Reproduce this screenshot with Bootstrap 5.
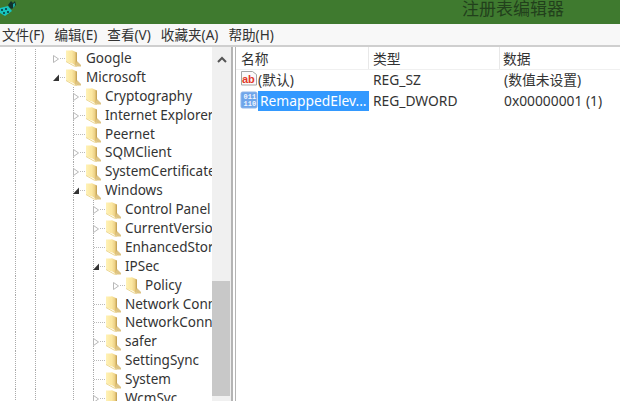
<!DOCTYPE html>
<html lang="zh-CN"><head><meta charset="utf-8"><title>注册表编辑器</title>
<link href="https://cdn.jsdelivr.net/npm/bootstrap@5.3.0/dist/css/bootstrap.min.css" rel="stylesheet">
<style>
html,body{width:620px;height:401px;overflow:hidden;margin:0;background:#fff}
body{font-family:"Noto Sans","Noto Sans CJK SC",sans-serif;font-size:13.5px;color:#333;line-height:19px}
.shell{width:620px;height:401px}
.titlebar{height:24px;background:#3f7a2f;color:#22401c;font-size:17px;position:relative}
.titlebar .ttl{margin-left:462px;line-height:18px}
.appicon{position:absolute;left:0;top:0}
.menubar{height:23px;background:#f8f8f8;border-bottom:2px solid #cfcfcf;padding-left:2px;gap:10px;line-height:21px;white-space:nowrap;font-size:13.6px}
.panes{height:354px}
.treepane{width:233px;flex:none;border-right:2px solid #b4b4b4}
.treelist{width:212px;flex:none;padding-top:2px;overflow:hidden}
.trow{height:18.9px;white-space:nowrap;align-items:center}
.gd{width:20px;height:19px;flex:none}
.gd0{width:16px;border-right:1px dotted #aaa}
.gd1{width:20px;border-right:1px dotted #aaa}
.gd2{width:38px;border-right:1px dotted #aaa}
.gd3{width:20px;border-right:1px dotted #aaa}
.tog{width:11px;height:19px;flex:none;overflow:visible}
.fld{width:17px;height:18px;flex:none;margin-right:3px}
.pad2{width:18px;flex:none}
.lvl2{margin-left:1px}
.sb{width:19px;background:#f0f0f0;flex:none}
.sbup{height:25px}
.sbtrack{flex:1 1 auto}
.sbthumb{height:115px;margin-top:209px;margin-right:1px;background:#c8c8c8}
.gap{width:3px;background:#fff;border-right:1px solid #b4b4b4;flex:none}
.listpane{flex:1 1 auto;min-width:0;font-size:13.8px}
.cols{height:23px;line-height:24px;border-bottom:1px solid #f0f0f0}
.c1{width:132px;flex:none;padding-left:5px}
.c2{width:131px;flex:none;padding-left:4px;border-left:1px solid #e8e8e8}
.c3{flex:1 1 auto;padding-left:3px;border-left:1px solid #e8e8e8}
.lrow{height:21px;line-height:20px;white-space:nowrap}
.lrow .c2,.lrow .c3{border-left:0}
.lrow .c2{padding-left:5px}
.lrow .c3{padding-left:5px}
.lrow .c1{padding-left:4px;align-items:flex-start;gap:0}
.sel{background:#3399ff;color:#fff;width:111px;height:20px;padding-left:2px;line-height:20px;flex:none}
.ico{width:18px;height:18px;flex:none}
.abt{font:700 11px "Liberation Sans",sans-serif;fill:#e2392b}
.bint{font:700 7px "Liberation Mono",monospace;fill:#f2f7ff}
</style></head><body>
<svg width="0" height="0" class="d-block position-absolute"><defs>
<linearGradient id="fg" x1="0" x2="1" y1="0" y2="0"><stop offset="0" stop-color="#fbe9a6"/><stop offset=".6" stop-color="#eed184"/><stop offset="1" stop-color="#bd9a4c"/></linearGradient>
<linearGradient id="fl" x1="0" x2="1" y1="0" y2="0"><stop offset="0" stop-color="#fff2b8"/><stop offset="1" stop-color="#fbe59a"/></linearGradient>
<symbol id="folder" viewBox="0 0 17 18" overflow="visible"><path d="M1 1.500h6v13L1 12.500Z" fill="url(#fl)"/><path d="M6.500 1l5.500 2.500V17.500L6.500 14Z" fill="url(#fg)"/><path d="M12 12l4 4v1.500H9.500Z" fill="#ddc383"/><path d="M1 12.500l8 4.500h3" stroke="#ecd690" fill="none"/></symbol>
<symbol id="open" viewBox="0 0 11 19" overflow="visible"><path d="M-.5 6.500l5 3.500-5 3.500Z" fill="#fff" stroke="#b8b8b8"/><path d="M6 9.500h5" stroke="#bbb" stroke-dasharray="1 1"/></symbol>
<symbol id="shut" viewBox="0 0 11 19" overflow="visible"><path d="M5 6.500v6.500H-1Z" fill="#333"/><path d="M6 9.500h5" stroke="#bbb" stroke-dasharray="1 1"/></symbol>
<symbol id="leaf" viewBox="0 0 11 19"><path d="M0 9.500h11" stroke="#bbb" stroke-dasharray="1 1"/></symbol>
</defs></svg>
<div class="shell d-flex flex-column">
<div class="titlebar flex-shrink-0">
<svg class="appicon" width="18" height="18" viewBox="0 0 18 18"><path d="M0 8l8-2 4 5-7 5-5-3Z" fill="#17c4bd"/><path d="M1 9h2v2H1ZM5 8h2v2H5ZM3 12h2v2H3ZM7 11h2v2H7Z" fill="#0a5a58"/><path d="M8 5l3-4 2 2 2-2 1 4-4 4-2-1Z" fill="#12332d"/><path d="M13 4l2-1v3l-2 2Z" fill="#1ea79f"/></svg>
<div class="ttl">注册表编辑器</div>
</div>
<div class="menubar d-flex flex-shrink-0"><span>文件(F)</span><span>编辑(E)</span><span>查看(V)</span><span>收藏夹(A)</span><span>帮助(H)</span></div>
<div class="panes d-flex">
<div class="treepane d-flex flex-shrink-0">
<div class="treelist">
<div class="trow d-flex"><span class="gd gd0"></span><span class="gd gd1"></span><span class="pad2"></span><svg class="tog"><use href="#open"/></svg><svg class="fld"><use href="#folder"/></svg><span class="lvl2">Google</span></div>
<div class="trow d-flex"><span class="gd gd0"></span><span class="gd gd1"></span><span class="pad2"></span><svg class="tog"><use href="#shut"/></svg><svg class="fld"><use href="#folder"/></svg><span class="lvl2">Microsoft</span></div>
<div class="trow d-flex"><span class="gd gd0"></span><span class="gd gd1"></span><span class="gd gd2"></span><svg class="tog"><use href="#open"/></svg><svg class="fld"><use href="#folder"/></svg><span>Cryptography</span></div>
<div class="trow d-flex"><span class="gd gd0"></span><span class="gd gd1"></span><span class="gd gd2"></span><svg class="tog"><use href="#open"/></svg><svg class="fld"><use href="#folder"/></svg><span>Internet Explorer</span></div>
<div class="trow d-flex"><span class="gd gd0"></span><span class="gd gd1"></span><span class="gd gd2"></span><svg class="tog"><use href="#leaf"/></svg><svg class="fld"><use href="#folder"/></svg><span>Peernet</span></div>
<div class="trow d-flex"><span class="gd gd0"></span><span class="gd gd1"></span><span class="gd gd2"></span><svg class="tog"><use href="#open"/></svg><svg class="fld"><use href="#folder"/></svg><span>SQMClient</span></div>
<div class="trow d-flex"><span class="gd gd0"></span><span class="gd gd1"></span><span class="gd gd2"></span><svg class="tog"><use href="#open"/></svg><svg class="fld"><use href="#folder"/></svg><span>SystemCertificates</span></div>
<div class="trow d-flex"><span class="gd gd0"></span><span class="gd gd1"></span><span class="gd gd2"></span><svg class="tog"><use href="#shut"/></svg><svg class="fld"><use href="#folder"/></svg><span>Windows</span></div>
<div class="trow d-flex"><span class="gd gd0"></span><span class="gd gd1"></span><span class="gd gd2"></span><span class="gd gd3"></span><svg class="tog"><use href="#open"/></svg><svg class="fld"><use href="#folder"/></svg><span>Control Panel</span></div>
<div class="trow d-flex"><span class="gd gd0"></span><span class="gd gd1"></span><span class="gd gd2"></span><span class="gd gd3"></span><svg class="tog"><use href="#open"/></svg><svg class="fld"><use href="#folder"/></svg><span>CurrentVersion</span></div>
<div class="trow d-flex"><span class="gd gd0"></span><span class="gd gd1"></span><span class="gd gd2"></span><span class="gd gd3"></span><svg class="tog"><use href="#leaf"/></svg><svg class="fld"><use href="#folder"/></svg><span>EnhancedStorage</span></div>
<div class="trow d-flex"><span class="gd gd0"></span><span class="gd gd1"></span><span class="gd gd2"></span><span class="gd gd3"></span><svg class="tog"><use href="#shut"/></svg><svg class="fld"><use href="#folder"/></svg><span>IPSec</span></div>
<div class="trow d-flex"><span class="gd gd0"></span><span class="gd gd1"></span><span class="gd gd2"></span><span class="gd gd3"></span><span class="gd"></span><svg class="tog"><use href="#open"/></svg><svg class="fld"><use href="#folder"/></svg><span>Policy</span></div>
<div class="trow d-flex"><span class="gd gd0"></span><span class="gd gd1"></span><span class="gd gd2"></span><span class="gd gd3"></span><svg class="tog"><use href="#leaf"/></svg><svg class="fld"><use href="#folder"/></svg><span>Network Connections</span></div>
<div class="trow d-flex"><span class="gd gd0"></span><span class="gd gd1"></span><span class="gd gd2"></span><span class="gd gd3"></span><svg class="tog"><use href="#leaf"/></svg><svg class="fld"><use href="#folder"/></svg><span>NetworkConnectivity</span></div>
<div class="trow d-flex"><span class="gd gd0"></span><span class="gd gd1"></span><span class="gd gd2"></span><span class="gd gd3"></span><svg class="tog"><use href="#open"/></svg><svg class="fld"><use href="#folder"/></svg><span>safer</span></div>
<div class="trow d-flex"><span class="gd gd0"></span><span class="gd gd1"></span><span class="gd gd2"></span><span class="gd gd3"></span><svg class="tog"><use href="#leaf"/></svg><svg class="fld"><use href="#folder"/></svg><span>SettingSync</span></div>
<div class="trow d-flex"><span class="gd gd0"></span><span class="gd gd1"></span><span class="gd gd2"></span><span class="gd gd3"></span><svg class="tog"><use href="#leaf"/></svg><svg class="fld"><use href="#folder"/></svg><span>System</span></div>
<div class="trow d-flex"><span class="gd gd0"></span><span class="gd gd1"></span><span class="gd gd2"></span><span class="gd gd3"></span><svg class="tog"><use href="#open"/></svg><svg class="fld"><use href="#folder"/></svg><span>WcmSvc</span></div>
</div>
<div class="sb d-flex flex-column">
<div class="sbup d-flex align-items-center justify-content-center"><svg width="10" height="7" viewBox="0 0 10 7"><path d="M1 6l4-4 4 4" fill="none" stroke="#555" stroke-width="2"/></svg></div>
<div class="sbtrack"><div class="sbthumb"></div></div>
</div>
</div>
<div class="gap"></div>
<div class="listpane">
<div class="cols d-flex"><div class="c1">名称</div><div class="c2">类型</div><div class="c3">数据</div></div>
<div class="lrow d-flex"><div class="c1 d-flex"><svg class="ico" viewBox="0 0 18 18"><path d="M1.500 1.500h11l4 3v10.500h-15Z" fill="#fafafa" stroke="#a5a5a5"/><text class="abt" x="2" y="12.500">ab</text></svg><span>(默认)</span></div><div class="c2">REG_SZ</div><div class="c3">(数值未设置)</div></div>
<div class="lrow d-flex"><div class="c1 d-flex"><svg class="ico" viewBox="0 0 18 18"><rect x="1" y="1" width="16" height="16" rx="1.500" fill="#6fa5ea" stroke="#8fb6ea"/><text class="bint" x="3.500" y="8">011</text><text class="bint" x="3.500" y="15">110</text></svg><div class="sel">RemappedElev...</div></div><div class="c2">REG_DWORD</div><div class="c3">0x00000001 (1)</div></div>
</div>
</div>
</div>
</body></html>
